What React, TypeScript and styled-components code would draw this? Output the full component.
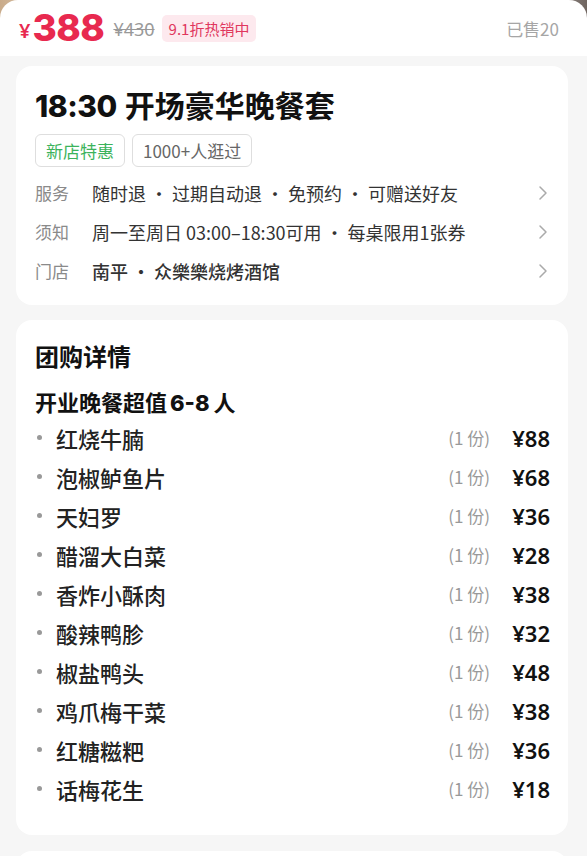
import React from "react";
import styled, { createGlobalStyle } from "styled-components";

const Global = createGlobalStyle`
  html, body { margin: 0; padding: 0; background: #f6f6f6; }
  body { font-family: "Noto Sans CJK SC", "Noto Sans", sans-serif; color: #222; }
  * { box-sizing: border-box; }
`;

const Page = styled.div`
  width: 587px;
  min-height: 856px;
  background: #f6f6f6;
  overflow: hidden;
`;

const Backdrop = styled.div`
  background: linear-gradient(90deg, #c9ab8a 0%, #e9dccd 12%, #f4efe9 50%, #d9d3cf 85%, #6f6560 100%);
`;

const PriceBar = styled.div`
  display: flex;
  align-items: center;
  height: 56px;
  padding: 0 28px 0 19px;
  background: #fff;
  border-radius: 18px 18px 0 0;
`;

const Yen = styled.span`
  color: #e8294f;
  font-family: "Noto Sans", sans-serif;
  font-size: 20px;
  font-weight: 600;
  margin-top: 4px;
`;

const Price = styled.span`
  color: #e8294f;
  font-family: Inter, "Noto Sans", sans-serif;
  font-size: 37px;
  font-weight: 800;
  letter-spacing: -0.5px;
  margin-left: 2px;
  margin-top: -2px;
  line-height: 1;
`;

const Original = styled.span`
  color: #999;
  font-family: "Noto Sans", sans-serif;
  font-size: 18px;
  text-decoration: line-through;
  margin-left: 9px;
  margin-top: 2px;
`;

const HotBadge = styled.span`
  margin-left: 7px;
  padding: 0 7px;
  height: 27px;
  line-height: 27px;
  border-radius: 5px;
  background: #fde9ee;
  color: #e0375d;
  font-size: 15px;
`;

const Sold = styled.span`
  margin-left: auto;
  color: #a6a6a6;
  font-size: 17px;
`;

const Card = styled.div<{ $top: number }>`
  margin: ${(p) => p.$top}px 0 0 16px;
  width: 552px;
  background: #fff;
  border-radius: 16px;
  padding: 0 18px 0 19px;
`;

const InfoCard = styled(Card)`
  padding-top: 20px;
  padding-bottom: 15px;
`;

const Title = styled.h1`
  margin: 0;
  font-size: 30px;
  line-height: 36px;
  font-weight: 700;
  color: #111;
  display: flex;
  align-items: baseline;
`;

const TitleNum = styled.span`
  font-family: Inter, "Noto Sans", sans-serif;
  font-weight: 800;
  font-size: 30px;
  margin-right: 8px;
  letter-spacing: -0.5px;
`;

const Tags = styled.div`
  display: flex;
  gap: 7px;
  margin-top: 10px;
`;

const Tag = styled.span<{ $green?: boolean }>`
  height: 33px;
  line-height: 31px;
  padding: 0 10px;
  border: 1px solid #dedede;
  border-radius: 6px;
  font-size: 17px;
  color: ${(p) => (p.$green ? "#3cb35c" : "#666")};
`;

const Rows = styled.div`
  margin-top: 6px;
`;

const InfoRow = styled.div`
  display: flex;
  align-items: center;
  height: 39px;
`;

const Label = styled.span`
  color: #8a8a8a;
  font-size: 17px;
  width: 57px;
  flex: none;
`;

const Value = styled.span<{ $strong?: boolean }>`
  color: #333;
  font-size: 18px;
  font-weight: ${(p) => (p.$strong ? 500 : 400)};
  flex: 1;
  white-space: nowrap;
`;

const Sep = styled.span`
  display: inline-block;
  width: 26px;
  text-align: center;
`;

const Chevron = styled.svg`
  width: 10px;
  height: 16px;
  flex: none;
  margin-right: 2px;
`;

const DetailCard = styled(Card)`
  padding-top: 21px;
  padding-bottom: 27px;
  margin-bottom: 16px;
`;

const SectionTitle = styled.h2`
  margin: 0;
  font-size: 24px;
  line-height: 30px;
  font-weight: 600;
  color: #111;
`;

const GroupTitle = styled.h3`
  margin: 15px 0 0;
  font-size: 22px;
  line-height: 30px;
  font-weight: 700;
  color: #111;
`;

const GroupNum = styled.span`
  font-family: Inter, "Noto Sans", sans-serif;
  font-weight: 800;
  margin: 0 4px 0 3px;
`;

const Item = styled.div`
  display: flex;
  align-items: center;
  height: 39px;
`;

const Dot = styled.span`
  width: 21px;
  flex: none;
  display: flex;
  align-items: center;
  padding-left: 2px;
  &::before {
    content: "";
    width: 5px;
    height: 5px;
    border-radius: 50%;
    background: #999;
  }
`;

const ItemName = styled.span`
  flex: 1;
  font-size: 22px;
  color: #222;
  font-weight: 500;
`;

const Qty = styled.span`
  font-size: 17px;
  color: #999;
  margin-right: 20px;
`;

const ItemPrice = styled.span`
  min-width: 40px;
  text-align: right;
  font-family: "Noto Sans", sans-serif;
  font-size: 22px;
  font-weight: 600;
  color: #111;
`;

const NextCard = styled(Card)`
  height: 40px;
  border-radius: 16px 16px 0 0;
`;

const ChevronIcon = () => (
  <Chevron viewBox="0 0 10 16">
    <path d="M2 2l6 6-6 6" fill="none" stroke="#aaa" strokeWidth="1.5" strokeLinecap="round" strokeLinejoin="round" />
  </Chevron>
);

const rows = [
  { label: "服务", parts: ["随时退", "过期自动退", "免预约", "可赠送好友"] },
  { label: "须知", parts: ["周一至周日 03:00–18:30可用", "每桌限用1张券"] },
  { label: "门店", parts: ["南平", "众樂樂烧烤酒馆"], strong: true },
];

const items = [
  ["红烧牛腩", "¥88"],
  ["泡椒鲈鱼片", "¥68"],
  ["天妇罗", "¥36"],
  ["醋溜大白菜", "¥28"],
  ["香炸小酥肉", "¥38"],
  ["酸辣鸭胗", "¥32"],
  ["椒盐鸭头", "¥48"],
  ["鸡爪梅干菜", "¥38"],
  ["红糖糍粑", "¥36"],
  ["话梅花生", "¥18"],
];

export default function App() {
  return (
    <Page>
      <Global />
      <Backdrop>
        <PriceBar>
          <Yen>¥</Yen>
          <Price>388</Price>
          <Original>¥430</Original>
          <HotBadge>9.1折热销中</HotBadge>
          <Sold>已售20</Sold>
        </PriceBar>
      </Backdrop>

      <InfoCard $top={10}>
        <Title>
          <TitleNum>18:30</TitleNum>开场豪华晚餐套
        </Title>
        <Tags>
          <Tag $green>新店特惠</Tag>
          <Tag>1000+人逛过</Tag>
        </Tags>
        <Rows>
          {rows.map((r) => (
            <InfoRow key={r.label}>
              <Label>{r.label}</Label>
              <Value $strong={r.strong}>
                {r.parts.map((p, i) => (
                  <React.Fragment key={p}>
                    {i > 0 && <Sep>·</Sep>}
                    {p}
                  </React.Fragment>
                ))}
              </Value>
              <ChevronIcon />
            </InfoRow>
          ))}
        </Rows>
      </InfoCard>

      <DetailCard $top={15}>
        <SectionTitle>团购详情</SectionTitle>
        <GroupTitle>
          开业晚餐超值<GroupNum>6-8</GroupNum>人
        </GroupTitle>
        {items.map(([name, price]) => (
          <Item key={name}>
            <Dot />
            <ItemName>{name}</ItemName>
            <Qty>(1 份)</Qty>
            <ItemPrice>{price}</ItemPrice>
          </Item>
        ))}
      </DetailCard>

      <NextCard $top={0} />
    </Page>
  );
}
